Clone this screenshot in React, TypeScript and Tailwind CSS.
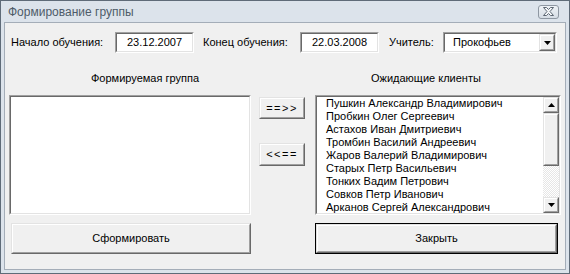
import React from "react";

function Raised({ className = "", children }: { className?: string; children?: React.ReactNode }) {
  return (
    <div className={`border border-t-[#e3e3e3] border-l-[#e3e3e3] border-b-[#696969] border-r-[#696969] ${className}`}>
      <div className="h-full w-full border border-t-white border-l-white border-b-[#a0a0a0] border-r-[#a0a0a0] bg-[#f0f0f0] flex items-center justify-center">
        {children}
      </div>
    </div>
  );
}

function Sunken({ className = "", innerClass = "", children }: { className?: string; innerClass?: string; children?: React.ReactNode }) {
  return (
    <div className={`border border-t-[#a0a0a0] border-l-[#a0a0a0] border-b-white border-r-white ${className}`}>
      <div className={`h-full w-full border border-t-[#696969] border-l-[#696969] border-b-[#e3e3e3] border-r-[#e3e3e3] bg-white ${innerClass}`}>
        {children}
      </div>
    </div>
  );
}

function TriUp() {
  return (
    <svg width="7" height="4" viewBox="0 0 7 4">
      <path d="M3.5 0 L7 4 L0 4 Z" fill="#000" />
    </svg>
  );
}
function TriDown() {
  return (
    <svg width="7" height="4" viewBox="0 0 7 4">
      <path d="M0 0 L7 0 L3.5 4 Z" fill="#000" />
    </svg>
  );
}

const clients = [
  "Пушкин Александр Владимирович",
  "Пробкин Олег Сергеевич",
  "Астахов Иван Дмитриевич",
  "Тромбин Василий Андреевич",
  "Жаров Валерий Владимирович",
  "Старых Петр Васильевич",
  "Тонких Вадим Петрович",
  "Совков Петр Иванович",
  "Арканов Сергей Александрович",
];

export default function App() {
  return (
    <div className="w-[570px] h-[274px] bg-[#dce3eb] border border-[#5f6b78] flex flex-col font-['Liberation_Sans',Arial,sans-serif] text-[11px] text-black overflow-hidden leading-none">
      {/* title bar */}
      <div className="h-[21px] flex items-center justify-between pl-[7px] pr-[10px]">
        <span className="text-[12px] text-[#4e5b69]">Формирование группы</span>
        <div className="w-[21px] h-[14px] rounded-[3px] border border-[#8e97a2] bg-gradient-to-b from-[#eef2f6] to-[#d6dde5] flex items-center justify-center">
          <svg width="11" height="9" viewBox="0 0 11 9">
            <path
              d="M0.5 0.5 H3.5 L5.5 2.5 L7.5 0.5 H10.5 L7 4.5 L10.5 8.5 H7.5 L5.5 6.5 L3.5 8.5 H0.5 L4 4.5 Z"
              fill="#f4f6f8"
              stroke="#5d6773"
              strokeWidth="1"
              strokeLinejoin="round"
            />
          </svg>
        </div>
      </div>

      {/* client area */}
      <div className="flex-1 mx-[3px] mb-[3px] border border-[#a4adb8] bg-[#f0f0f0] flex flex-col">
        {/* row 1 */}
        <div className="mt-[9px] h-[21px] flex items-center">
          <span className="ml-[6px] w-[104px]">Начало обучения:</span>
          <Sunken className="w-[79px] h-[21px]" innerClass="flex items-center justify-center">
            23.12.2007
          </Sunken>
          <span className="ml-[9px] w-[97px]">Конец обучения:</span>
          <Sunken className="w-[79px] h-[21px]" innerClass="flex items-center justify-center">
            22.03.2008
          </Sunken>
          <span className="ml-[10px] w-[54px]">Учитель:</span>
          <Sunken className="w-[114px] h-[21px]" innerClass="flex items-center">
            <span className="flex-1 pl-[8px]">Прокофьев</span>
            <Raised className="w-[16px] h-[17px]">
              <TriDown />
            </Raised>
          </Sunken>
        </div>

        {/* row 2 labels */}
        <div className="mt-[18px] h-[14px] flex items-center">
          <div className="w-[366px] pl-[86px]">Формируемая группа</div>
          <div>Ожидающие клиенты</div>
        </div>

        {/* row 3 lists */}
        <div className="mt-[10px] h-[120px] flex">
          <Sunken className="ml-[4px] w-[242px] h-[120px]" />
          <div className="ml-[8px] w-[46px] flex flex-col">
            <Raised className="mt-[2px] h-[22px]">
              <span className="tracking-[1.5px]">==&gt;&gt;</span>
            </Raised>
            <Raised className="mt-[24px] h-[23px]">
              <span className="tracking-[1.5px]">&lt;&lt;==</span>
            </Raised>
          </div>
          <Sunken className="ml-[10px] w-[246px] h-[120px]" innerClass="flex">
            <div className="flex-1 pl-[9px] text-[11px] overflow-hidden">
              {clients.map((c) => (
                <div key={c} className="h-[13px] leading-[13px] whitespace-nowrap">
                  {c}
                </div>
              ))}
            </div>
            <div className="w-[16px] flex flex-col">
              <Raised className="h-[16px]">
                <TriUp />
              </Raised>
              <Raised className="h-[53px]" />
              <div className="flex-1 bg-[repeating-conic-gradient(#ffffff_0_25%,#e6e6e6_0_50%)] bg-[length:2px_2px]" />
              <Raised className="h-[16px]">
                <TriDown />
              </Raised>
            </div>
          </Sunken>
        </div>

        {/* row 4 buttons */}
        <div className="mt-[8px] h-[31px] flex">
          <Raised className="ml-[6px] w-[240px] h-[31px]">
            <span className="text-[11px]">Сформировать</span>
          </Raised>
          <div className="ml-[64px] w-[243px] h-[31px] border border-black">
            <Raised className="w-full h-full">
              <span className="text-[11px]">Закрыть</span>
            </Raised>
          </div>
        </div>
      </div>
    </div>
  );
}
